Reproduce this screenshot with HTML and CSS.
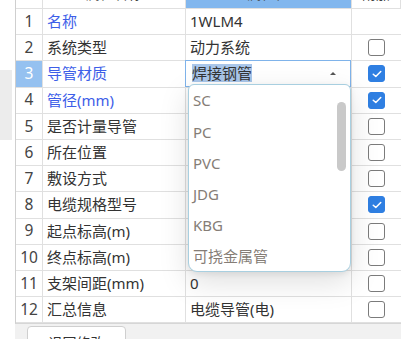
FILE: index.html
```html
<!DOCTYPE html>
<html lang="zh-CN">
<head>
    <meta charset="UTF-8">
    <title>属性表</title>
    <link rel="stylesheet" href="styles.css">
</head>
<body>
    <div class="page">
        <div class="side"><div class="side-block"></div></div>
        <div class="main">
            <div class="grid">
                <div class="cell head"></div>
                <div class="cell head center">属性名称</div>
                <div class="cell head head-active center">属性值</div>
                <div class="cell head center">附加</div>

                <div class="cell num">1</div>
                <div class="cell name blue">名称</div>
                <div class="cell value">1WLM4</div>
                <div class="cell check"></div>

                <div class="cell num">2</div>
                <div class="cell name">系统类型</div>
                <div class="cell value">动力系统</div>
                <div class="cell check"><span class="box"></span></div>

                <div class="cell num num-active">3</div>
                <div class="cell name blue">导管材质</div>
                <div class="cell value editing">
                    <div class="select">
                        <span class="selected-text">焊接钢管</span>
                        <span class="arrow"></span>
                    </div>
                    <div class="dropdown">
                        <div class="option">SC</div>
                        <div class="option">PC</div>
                        <div class="option">PVC</div>
                        <div class="option">JDG</div>
                        <div class="option">KBG</div>
                        <div class="option">可挠金属管</div>
                        <div class="scroll-thumb"></div>
                    </div>
                </div>
                <div class="cell check"><span class="box checked"><svg viewBox="0 0 16 16" width="12" height="12"><path d="M3 8.3 L6.4 11.4 L13 4.6" fill="none" stroke="#fff" stroke-width="2" stroke-linecap="round" stroke-linejoin="round"/></svg></span></div>

                <div class="cell num">4</div>
                <div class="cell name blue">管径(mm)</div>
                <div class="cell value"></div>
                <div class="cell check"><span class="box checked"><svg viewBox="0 0 16 16" width="12" height="12"><path d="M3 8.3 L6.4 11.4 L13 4.6" fill="none" stroke="#fff" stroke-width="2" stroke-linecap="round" stroke-linejoin="round"/></svg></span></div>

                <div class="cell num">5</div>
                <div class="cell name">是否计量导管</div>
                <div class="cell value"></div>
                <div class="cell check"><span class="box"></span></div>

                <div class="cell num">6</div>
                <div class="cell name">所在位置</div>
                <div class="cell value"></div>
                <div class="cell check"><span class="box"></span></div>

                <div class="cell num">7</div>
                <div class="cell name">敷设方式</div>
                <div class="cell value"></div>
                <div class="cell check"><span class="box"></span></div>

                <div class="cell num">8</div>
                <div class="cell name">电缆规格型号</div>
                <div class="cell value"></div>
                <div class="cell check"><span class="box checked"><svg viewBox="0 0 16 16" width="12" height="12"><path d="M3 8.3 L6.4 11.4 L13 4.6" fill="none" stroke="#fff" stroke-width="2" stroke-linecap="round" stroke-linejoin="round"/></svg></span></div>

                <div class="cell num">9</div>
                <div class="cell name">起点标高(m)</div>
                <div class="cell value"></div>
                <div class="cell check"><span class="box"></span></div>

                <div class="cell num">10</div>
                <div class="cell name">终点标高(m)</div>
                <div class="cell value"></div>
                <div class="cell check"><span class="box"></span></div>

                <div class="cell num">11</div>
                <div class="cell name">支架间距(mm)</div>
                <div class="cell value">0</div>
                <div class="cell check"><span class="box"></span></div>

                <div class="cell num">12</div>
                <div class="cell name">汇总信息</div>
                <div class="cell value">电缆导管(电)</div>
                <div class="cell check"><span class="box"></span></div>
            </div>
            <div class="footer">
                <button type="button" class="btn">退回修改</button>
            </div>
        </div>
    </div>
</body>
</html>
```

FILE: styles.css
```css
body {
    margin: 0;
    padding: 0;
    background: #fff;
    font-family: "Noto Sans", "Noto Sans CJK SC", sans-serif;
    font-size: 15px;
    color: #333;
}
.page {
    display: flex;
    height: 339px;
    overflow: hidden;
}
.side {
    width: 15px;
    flex-shrink: 0;
    padding-top: 70px;
}
.side-block {
    width: 12px;
    height: 70px;
    background: #ececec;
}
.main {
    flex: 1;
    display: flex;
    flex-direction: column;
    min-width: 0;
}
.grid {
    display: grid;
    grid-template-columns: 27px 143px 166px 1fr;
    grid-template-rows: 26px repeat(12, 26.2px);
    margin-top: -17px;
    border-left: 1px solid #cfcfcf;
    border-bottom: 1px solid #d6d6d6;
    background: #fff;
}
.cell {
    box-sizing: border-box;
    border-right: 1px solid #e0e0e0;
    border-bottom: 1px solid #e0e0e0;
    display: flex;
    align-items: center;
    white-space: nowrap;
    line-height: 1;
}
.center {
    justify-content: center;
}
.head {
    color: #444;
    font-size: 14px;
    padding-bottom: 3px;
}
.head-active {
    background: #82b7ee;
}
.num {
    justify-content: center;
    font-size: 15.5px;
    color: #444;
}
.num-active {
    background: #95c1f0;
    color: #fff;
}
.name {
    padding-left: 4px;
}
.blue {
    color: #3d5ee8;
}
.value {
    padding-left: 4px;
    position: relative;
}
.check {
    justify-content: center;
    border-right: none;
}
.box {
    box-sizing: border-box;
    width: 17px;
    height: 17px;
    border: 1.5px solid #7b7b7b;
    border-radius: 3px;
    background: #fff;
    display: flex;
    align-items: center;
    justify-content: center;
}
.box.checked {
    background: #2f7fe2;
    border-color: #2f7fe2;
}
.select {
    position: absolute;
    left: -1px;
    top: -1px;
    right: 0;
    bottom: 0;
    border: 1px solid #7fb3ea;
    background: #fff;
    display: flex;
    align-items: center;
    padding-left: 6px;
    padding-right: 14px;
    justify-content: space-between;
}
.selected-text {
    background: #a9c6ea;
    padding: 1px 0;
    line-height: 16px;
}
.arrow {
    width: 0;
    height: 0;
    border-left: 3px solid transparent;
    border-right: 3px solid transparent;
    border-bottom: 3px solid #555;
}
.dropdown {
    position: absolute;
    left: 2px;
    top: 23px;
    width: 163px;
    height: 188px;
    box-sizing: border-box;
    border: 1px solid #a8cfe0;
    border-radius: 6px 6px 9px 9px;
    background: #fff;
    box-shadow: 0 10px 30px rgba(0, 0, 0, 0.13), 0 2px 6px rgba(0, 0, 0, 0.08);
    z-index: 5;
}
.option {
    height: 31.2px;
    display: flex;
    align-items: center;
    padding-left: 4px;
    color: #857d76;
    font-size: 15px;
}
.scroll-thumb {
    position: absolute;
    left: 148px;
    top: 17px;
    width: 9px;
    height: 69px;
    border-radius: 5px;
    background: #c9c9c9;
}
.footer {
    flex: 1;
    background: #f1f1f1;
    padding: 2px 0 0 12px;
}
.btn {
    box-sizing: border-box;
    width: 99px;
    height: 30px;
    border: 1px solid #cfcfcf;
    border-radius: 4px;
    background: #fff;
    font-family: "Noto Sans CJK SC", sans-serif;
    font-size: 14px;
    line-height: 14px;
    color: #333;
    padding: 8px 0 0;
    vertical-align: top;
    display: flex;
    justify-content: center;
}
```
